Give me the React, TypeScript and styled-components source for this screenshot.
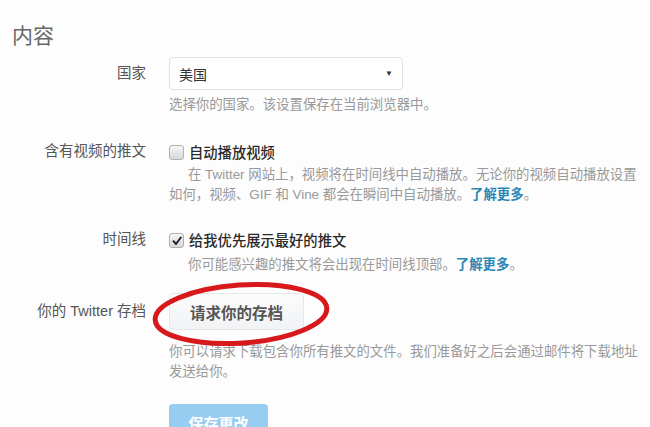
import React from "react";
import styled, { createGlobalStyle } from "styled-components";

const GlobalStyle = createGlobalStyle`
  html, body {
    margin: 0;
    padding: 0;
    background: #fdfdfd;
  }
  body {
    font-family: "Liberation Sans", "Noto Sans CJK SC", sans-serif;
    color: #555;
  }
`;

const Page = styled.main`
  width: 650px;
  height: 427px;
  overflow: hidden;
  box-sizing: border-box;
`;

const Heading = styled.h2`
  margin: 24px 0 0 12px;
  font-size: 21px;
  line-height: 24px;
  font-weight: 400;
  color: #666;
`;

const Field = styled.div<{ $top: number }>`
  display: grid;
  grid-template-columns: 146px 472px;
  column-gap: 23px;
  margin-top: ${(p) => p.$top}px;
`;

const Label = styled.div<{ $lh: number }>`
  text-align: right;
  font-size: 14.5px;
  line-height: ${(p) => p.$lh}px;
  color: #555;
  white-space: nowrap;
`;

const Control = styled.div`
  display: flex;
  flex-direction: column;
  align-items: flex-start;
`;

const Select = styled.div`
  width: 234px;
  height: 33px;
  box-sizing: border-box;
  display: flex;
  align-items: center;
  justify-content: space-between;
  padding: 0 9px 0 9px;
  background: #fff;
  border: 1px solid #dde3e8;
  border-radius: 4px;
  font-size: 14px;
  color: #333;
`;

const Caret = styled.span`
  font-size: 8px;
  color: #333;
`;

const Help = styled.p<{ $top: number; $indent?: boolean }>`
  margin: ${(p) => p.$top}px 0 0;
  font-size: 13.4px;
  line-height: 20px;
  color: #999;
  text-indent: ${(p) => (p.$indent ? "19px" : "0")};
`;

const More = styled.a`
  color: #2b86b7;
  font-weight: 700;
  text-decoration: none;
`;

const CheckLine = styled.label`
  display: flex;
  align-items: center;
  gap: 5px;
  height: 20px;
  font-size: 14.3px;
  font-weight: 500;
  color: #2a2a2a;
`;

const Box = styled.span`
  width: 15px;
  height: 15px;
  box-sizing: border-box;
  border: 1px solid #b0b0b0;
  border-radius: 3px;
  background: linear-gradient(#f6f6f6, #d8d8d8);
  display: flex;
  align-items: center;
  justify-content: center;
  margin-top: 3px;
`;

const ButtonWrap = styled.div`
  position: relative;
`;

const ArchiveButton = styled.button`
  width: 135px;
  height: 37px;
  border: 1px solid #e3e8ec;
  border-radius: 4px;
  background: linear-gradient(#fbfbfb, #f1f3f5);
  font-family: inherit;
  font-size: 15.5px;
  font-weight: 700;
  color: #555;
  padding: 0;
`;

const Ring = styled.svg`
  position: absolute;
  left: -18px;
  top: -12px;
  width: 180px;
  height: 66px;
  pointer-events: none;
`;

const SaveButton = styled.button`
  margin: 22px 0 0 169px;
  width: 99px;
  height: 36px;
  border: none;
  border-radius: 4px;
  background: #97cdf0;
  color: #fff;
  font-family: inherit;
  font-size: 15px;
  font-weight: 700;
  display: block;
  padding: 0;
`;

function Checkbox({ checked }: { checked?: boolean }) {
  return (
    <Box>
      {checked && (
        <svg width="10" height="10" viewBox="0 0 10 10">
          <path d="M1.5 5.2 L4 8 L8.8 1.5" fill="none" stroke="#222" strokeWidth="2" strokeLinecap="round" strokeLinejoin="round" />
        </svg>
      )}
    </Box>
  );
}

export default function App() {
  return (
    <Page>
      <GlobalStyle />
      <Heading>内容</Heading>

      <Field $top={9}>
        <Label $lh={33}>国家</Label>
        <Control>
          <Select>
            <span>美国</span>
            <Caret>▼</Caret>
          </Select>
          <Help $top={5}>选择你的国家。该设置保存在当前浏览器中。</Help>
        </Control>
      </Field>

      <Field $top={26}>
        <Label $lh={20}>含有视频的推文</Label>
        <Control>
          <CheckLine>
            <Checkbox />
            自动播放视频
          </CheckLine>
          <Help $top={4} $indent>
            在 Twitter 网站上，视频将在时间线中自动播放。无论你的视频自动播放设置
            <br />
            如何，视频、GIF 和 Vine 都会在瞬间中自动播放。<More href="#">了解更多</More>。
          </Help>
        </Control>
      </Field>

      <Field $top={24}>
        <Label $lh={20}>时间线</Label>
        <Control>
          <CheckLine>
            <Checkbox checked />
            给我优先展示最好的推文
          </CheckLine>
          <Help $top={6} $indent>
            你可能感兴趣的推文将会出现在时间线顶部。<More href="#">了解更多</More>。
          </Help>
        </Control>
      </Field>

      <Field $top={18}>
        <Label $lh={37}>你的 Twitter 存档</Label>
        <Control>
          <ButtonWrap>
            <ArchiveButton>请求你的存档</ArchiveButton>
            <Ring viewBox="0 0 180 66">
              <ellipse cx="90" cy="33" rx="86" ry="29" transform="rotate(-4 90 33)" fill="none" stroke="#d8191b" strokeWidth="5" />
            </Ring>
          </ButtonWrap>
          <Help $top={12}>
            你可以请求下载包含你所有推文的文件。我们准备好之后会通过邮件将下载地址
            <br />
            发送给你。
          </Help>
        </Control>
      </Field>

      <SaveButton>保存更改</SaveButton>
    </Page>
  );
}
